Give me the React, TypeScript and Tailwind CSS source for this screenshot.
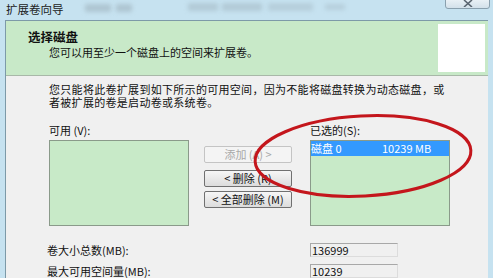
import React from "react";

const font = { fontFamily: '"Noto Sans CJK SC", "Noto Sans", sans-serif' };

function Btn({ children, disabled }: { children: React.ReactNode; disabled?: boolean }) {
  return (
    <div
      className={`h-[17px] w-[88px] flex items-center justify-center rounded-[2px] border text-[11px] leading-none ${
        disabled
          ? "border-[#c4c4c4] text-[#a8a8a8] bg-[#f4f4f4]"
          : "border-[#707070] text-[#111] bg-gradient-to-b from-[#f6f6f6] to-[#dcdcdc]"
      }`}
    >
      {children}
    </div>
  );
}

export default function App() {
  return (
    <div
      className="relative w-[493px] h-[278px] overflow-hidden bg-[#c6e2f0] text-[#111]"
      style={font}
    >
      {/* title bar */}
      <div className="relative h-[20px] flex items-center pl-[6px] text-[11.5px] text-[#1a1a1a]">
        <span>扩展卷向导</span>
        <div className="absolute left-[85px] top-[4px] w-[26px] h-[8px] bg-[#9fb3be] blur-[2px] opacity-60" />
        <div className="absolute left-[116px] top-[4px] w-[16px] h-[8px] bg-[#9fb3be] blur-[2px] opacity-60" />
        <div className="absolute left-[188px] top-[3px] w-[30px] h-[8px] bg-[#9fb3be] blur-[2px] opacity-50" />
        <div className="absolute left-[222px] top-[3px] w-[40px] h-[8px] bg-[#9fb3be] blur-[2px] opacity-50" />
        <div className="absolute left-[268px] top-[3px] w-[45px] h-[8px] bg-[#9fb3be] blur-[2px] opacity-40" />
        <div className="absolute left-[325px] top-[4px] w-[20px] h-[6px] bg-[#9fb3be] blur-[2px] opacity-40" />
        <div className="absolute left-[445px] top-[-3px] w-[45px] h-[12px] rounded-[3px] border border-[#8aa0ae] bg-gradient-to-b from-[#eef4f8] to-[#d3e1ea] flex items-end justify-center">
          <svg width="10" height="7" viewBox="0 0 10 7" className="mb-[1px]">
            <path d="M1 0 L9 7 M9 0 L1 7" stroke="#5a6570" strokeWidth="1.6" />
          </svg>
        </div>
      </div>

      {/* inner panel */}
      <div className="ml-[5px] mr-[5px] h-[258px] border-l border-t border-[#7d9aa8] bg-[#f0f0f0] flex flex-col">
        {/* header */}
        <div className="h-[55px] bg-[#c8e9c8] border-b border-[#a8b8a8] flex">
          <div className="flex-1 pl-[22px] pt-[8px]">
            <div className="text-[12.5px] font-bold leading-[16px]">选择磁盘</div>
            <div className="pl-[21px] text-[11px] leading-[15px]">您可以用至少一个磁盘上的空间来扩展卷。</div>
          </div>
          <div className="w-[47px] h-[48px] bg-white mt-[3px] mr-[3px]" />
        </div>

        {/* body */}
        <div className="pl-[43px] pt-[7px] relative">
          <div className="text-[11px] leading-[13px] tracking-[0.3px]">
            <div>您只能将此卷扩展到如下所示的可用空间，因为不能将磁盘转换为动态磁盘，或</div>
            <div>者被扩展的卷是启动卷或系统卷。</div>
          </div>

          <div className="flex mt-[14px]">
            <div className="w-[140px]">
              <div className="h-[14px] text-[11px] leading-[14px]">可用 (V):</div>
              <div className="mt-[3px] h-[86px] bg-[#c8eac8] border border-[#8a9a8a]" />
            </div>
            <div className="ml-[15px] w-[88px] pt-[23px] flex flex-col gap-[7px]">
              <Btn disabled>添加 (A) &gt;</Btn>
              <Btn>&lt; 删除 (R)</Btn>
              <div className="-mt-[3px]">
                <Btn>&lt; 全部删除 (M)</Btn>
              </div>
            </div>
            <div className="ml-[18px] w-[140px]">
              <div className="h-[14px] text-[11px] leading-[14px]">已选的(S):</div>
              <div className="mt-[3px] h-[86px] bg-[#c8eac8] border border-[#8a9a8a]">
                <div className="h-[15px] bg-[#3399ff] text-white text-[11px] leading-[15px] flex">
                  <span className="w-[71px]">磁盘 0</span>
                  <span>10239 MB</span>
                </div>
              </div>
            </div>
          </div>

          <div className="-ml-[2px] mt-[17px] flex items-center h-[14px]">
            <div className="w-[263px] text-[11px]">卷大小总数(MB):</div>
            <div className="w-[88px] h-[14px] border border-[#dcdcdc] border-t-[#a8a8a8] border-l-[#a8a8a8] text-[11px] leading-[12px] pl-[1px]">136999</div>
          </div>
          <div className="-ml-[2px] mt-[7px] flex items-center h-[14px]">
            <div className="w-[263px] text-[11px]">最大可用空间量(MB):</div>
            <div className="w-[88px] h-[14px] border border-[#dcdcdc] border-t-[#a8a8a8] border-l-[#a8a8a8] text-[11px] leading-[12px] pl-[1px]">10239</div>
          </div>
        </div>
      </div>

      {/* red ellipse annotation */}
      <svg className="absolute left-0 top-0 pointer-events-none" width="493" height="278">
        <ellipse
          cx="363"
          cy="156"
          rx="108"
          ry="40"
          transform="rotate(-3 363 156)"
          fill="none"
          stroke="#c4161c"
          strokeWidth="3"
        />
      </svg>
    </div>
  );
}
